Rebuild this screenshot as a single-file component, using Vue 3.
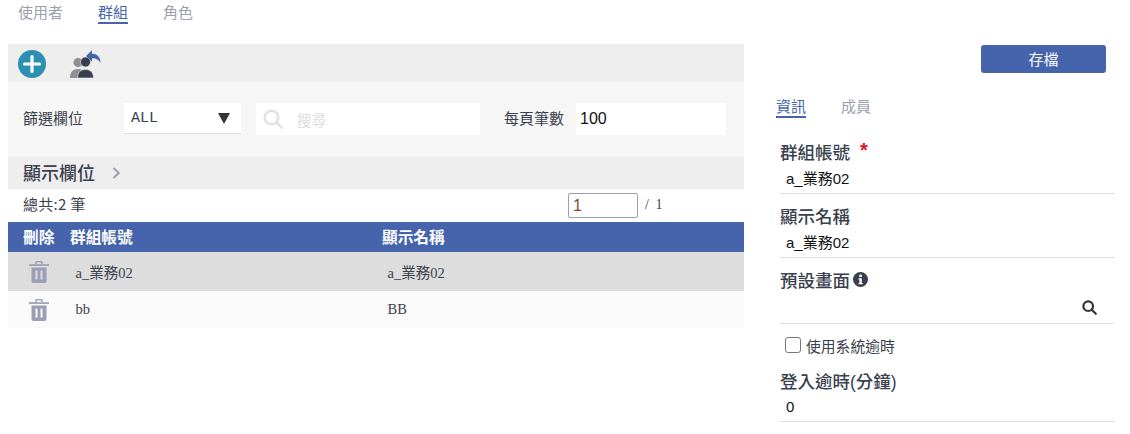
<script setup>
const rows = [
  { id: 'a_業務02', name: 'a_業務02', active: true },
  { id: 'bb', name: 'BB', active: false }
]
</script>

<template>
  <div class="page">
    <main class="left">
      <nav class="tabs">
        <span class="tab">使用者</span>
        <span class="tab on">群組</span>
        <span class="tab">角色</span>
      </nav>
      <div class="toolbar">
        <svg class="ic-plus" width="28" height="28" viewBox="0 0 28 28">
          <circle cx="14" cy="14" r="14" fill="#2c90b4" />
          <path d="M14 6.5v15M6.5 14h15" stroke="#fff" stroke-width="3.2" stroke-linecap="round" />
        </svg>
        <svg class="ic-group" width="32" height="29" viewBox="0 0 32 29">
          <circle cx="8" cy="12.500" r="4.500" fill="#8f8f94" />
          <path d="M0 28c0-6 3-9 8-9 2 0 3 .5 4 1-2 2-3 4-3 8z" fill="#8f8f94" />
          <circle cx="15.500" cy="12" r="5" fill="#3a3f4e" stroke="#eee" stroke-width=".6" />
          <path d="M7.500 28c0-6 3.500-8.500 8-8.500s8 2.500 8 8.500z" fill="#3a3f4e" stroke="#eee" stroke-width=".6" />
          <path d="M16 6 22 0.300v3.500c5 0 8.500 3 8.500 9.500-1.500-3.500-4-5-8.500-5v3.500z" fill="#4564ab" />
        </svg>
      </div>
      <div class="filters">
        <span class="flabel">篩選欄位</span>
        <div class="select">
          <span>ALL</span>
          <i class="caret"></i>
        </div>
        <div class="search">
          <svg width="20" height="20" viewBox="0 0 20 20" fill="none" stroke="#e2e2e2" stroke-width="2.600">
            <circle cx="8.500" cy="8.500" r="6.800" />
            <path d="M13.500 13.500 18.500 18.500" stroke-linecap="round" />
          </svg>
          <span class="ph">搜尋</span>
        </div>
        <span class="plabel">每頁筆數</span>
        <div class="pagesize">100</div>
      </div>
      <div class="section">
        <span class="stitle">顯示欄位</span>
        <svg width="9" height="12" viewBox="0 0 9 12" fill="none" stroke="#9a9fb5" stroke-width="2">
          <path d="M1.500 1 6.800 6 1.500 11" />
        </svg>
      </div>
      <div class="summary">
        <span class="total">總共:2 筆</span>
        <div class="pager">
          <span class="pageinput">1</span>
          <span class="pagetotal">/ 1</span>
        </div>
      </div>
      <div class="thead">
        <span class="c1">刪除</span>
        <span>群組帳號</span>
        <span>顯示名稱</span>
      </div>
      <div v-for="r in rows" :key="r.id" class="trow" :class="{ active: r.active }">
        <span class="trash">
          <svg width="20" height="22" viewBox="0 0 20 22">
            <path d="M7 3V1.800C7 1 7.600.5 8.400.5h3.200c.8 0 1.400.5 1.400 1.300V3" fill="none" stroke="#9a9fb5" stroke-width="1.500" />
            <path d="M0 3.200h20v1.700H0z" fill="#9a9fb5" />
            <path fill-rule="evenodd" d="M2.500 6.500h15V20c0 1.100-.9 2-2 2h-11c-1.100 0-2-.9-2-2zM6.500 9.500v9h2v-9zM11.500 9.500v9h2v-9z" fill="#9a9fb5" />
          </svg>
        </span>
        <span class="cell">{{ r.id }}</span>
        <span class="cell">{{ r.name }}</span>
      </div>
    </main>

    <aside class="right">
      <div class="savebar"><button class="save" type="button">存檔</button></div>
      <nav class="subtabs">
        <span class="tab on">資訊</span>
        <span class="tab">成員</span>
      </nav>
      <div class="form">
        <div class="field f1">
          <label>群組帳號<em>*</em></label>
          <div class="value">a_業務02</div>
        </div>
        <div class="field f2">
          <label>顯示名稱</label>
          <div class="value">a_業務02</div>
        </div>
        <div class="field f3">
          <label>預設畫面
            <svg width="15" height="15" viewBox="0 0 15 15">
              <circle cx="7.500" cy="7.500" r="7.500" fill="#3a3f4e" />
              <rect x="6.300" y="2.600" width="2.500" height="2.400" fill="#fff" />
              <path d="M5.500 6.200h3.300v4.700h1v1.300H5.500v-1.300h.9V7.500h-.9z" fill="#fff" />
            </svg>
          </label>
          <div class="value lookup">
            <svg width="15" height="15" viewBox="0 0 15 15" fill="none" stroke="#2f3442" stroke-width="2.200">
              <circle cx="6.200" cy="6.200" r="4.800" />
              <path d="M9.800 9.800 13.800 13.800" stroke-linecap="round" />
            </svg>
          </div>
        </div>
        <div class="check"><i class="box"></i><span>使用系統逾時</span></div>
        <div class="field f4">
          <label>登入逾時(分鐘)</label>
          <div class="value">0</div>
        </div>
      </div>
    </aside>
  </div>
</template>

<style scoped>
.page {
  width: 1130px;
  height: 434px;
  overflow: hidden;
  display: flex;
  background: #fff;
  color: #3a3f4e;
  font-family: "Noto Sans CJK TC", "Liberation Sans", sans-serif;
  font-size: 15px;
}
.left {
  width: 736px;
  margin-left: 8px;
  flex: none;
}
.tabs {
  height: 44px;
  padding-left: 10px;
  display: flex;
  gap: 35px;
  align-items: flex-start;
}
.tab {
  display: block;
  height: 24px;
  line-height: 24px;
  font-size: 15px;
  color: #9a9fb0;
  box-sizing: border-box;
}
.tab.on {
  color: #4564ab;
  border-bottom: 2px solid #4564ab;
}
.toolbar {
  height: 38px;
  background: #eee;
  display: flex;
  align-items: center;
  padding-left: 10px;
  gap: 24px;
}
.ic-plus { margin-top: 2px; }
.ic-group { margin-top: 3px; }
.filters {
  height: 75px;
  background: #f6f6f6;
  box-sizing: border-box;
  padding: 21px 0 0 15px;
  display: flex;
  align-items: flex-start;
}
.flabel, .plabel { line-height: 30px; color: #3a3f4e; }
.flabel { width: 101px; }
.select {
  width: 117px;
  height: 31px;
  box-sizing: border-box;
  background: #fff;
  border-bottom: 1px solid #ddd;
  padding: 0 10px 0 7px;
  display: flex;
  align-items: center;
  justify-content: space-between;
  font-family: "Liberation Mono", monospace;
  font-size: 15px;
}
.caret {
  width: 0;
  height: 0;
  border-left: 6.500px solid transparent;
  border-right: 6.500px solid transparent;
  border-top: 11px solid #333;
  margin-right: 1px;
}
.search {
  width: 224px;
  height: 32px;
  margin-left: 15px;
  background: #fff;
  padding-left: 7px;
  box-sizing: border-box;
  display: flex;
  align-items: center;
}
.ph { margin-left: 14px; color: #dcdcdc; font-size: 14.500px; }
.plabel { margin-left: 24px; width: 72px; }
.pagesize {
  width: 150px;
  height: 32px;
  background: #fff;
  box-sizing: border-box;
  padding-left: 4px;
  font: 16px/32px "Liberation Sans", sans-serif;
  color: #111;
}
.section {
  height: 32px;
  background: #eee;
  display: flex;
  align-items: center;
  padding-left: 15px;
  gap: 17px;
}
.stitle { font-size: 18px; line-height: 30px; padding-bottom: 2px; font-weight: 500; color: #3a3f4e; }
.summary {
  height: 33px;
  padding-left: 15px;
  display: flex;
  align-items: center;
  justify-content: space-between;
}
.total { font-size: 15px; letter-spacing: .3px; line-height: 20px; padding-bottom: 3px; }
.pager {
  display: flex;
  align-items: center;
  width: 176px;
  margin-top: -1px;
}
.pageinput {
  width: 70px;
  height: 25px;
  box-sizing: border-box;
  border: 1px solid #9a9fb5;
  border-radius: 2px;
  padding-left: 4px;
  font: 16px/23px "Liberation Sans", sans-serif;
  color: #7a4a3a;
}
.pagetotal {
  margin-left: 7px;
  font: 14px "Liberation Serif", serif;
  word-spacing: 3px;
}
.thead, .trow {
  display: grid;
  grid-template-columns: 62px 312px 1fr;
  align-items: center;
}
.thead {
  height: 30px;
  padding-bottom: 2px;
  box-sizing: border-box;
  background: #4564ab;
  color: #fff;
  font-weight: 700;
  font-size: 15.700px;
}
.c1 { padding-left: 15px; }
.trow {
  height: 37px;
  background: #fafafa;
  font-size: 14.500px;
}
.trow.active {
  height: 39px;
  background: #ddd;
}
.trash {
  display: flex;
  padding-left: 21px;
}
.cell {
  padding-left: 5.500px;
  padding-bottom: 1px;
  font-family: "Liberation Serif", "Noto Sans CJK TC", serif;
  color: #3a3f4e;
}
.right {
  width: 338px;
  margin-left: 32px;
  flex: none;
}
.savebar {
  height: 29px;
  margin-top: 45px;
  display: flex;
  justify-content: flex-end;
  padding-right: 8px;
}
.save {
  width: 125px;
  height: 28px;
  padding: 0;
  border: none;
  border-radius: 3px;
  background: #4564ab;
  color: #fff;
  font-family: inherit;
  font-size: 15px;
  line-height: 26px;
}
.subtabs {
  margin-top: 20px;
  display: flex;
  gap: 35px;
}
.subtabs .tab { height: 24px; }
.form {
  margin-top: 21px;
  padding-left: 4px;
  display: flex;
  flex-direction: column;
}
.field label {
  display: flex;
  align-items: center;
  height: 24px;
  margin-bottom: 4px;
  font-size: 17.500px;
  font-weight: 500;
  color: #3a3f4e;
  font-family: "Liberation Sans", "Noto Sans CJK TC", sans-serif;
}
.field label svg { margin-left: 3px; }
.field label em {
  color: #e8131f;
  font-style: normal;
  font-weight: 700;
  font-size: 20px;
  margin-left: 10px;
  margin-top: -2px;
}
.value {
  height: 27px;
  box-sizing: border-box;
  padding-left: 6px;
  border-bottom: 1px solid #ddd;
  font: 15px/24px "Liberation Sans", "Noto Sans CJK TC", sans-serif;
  color: #111;
}
.f2, .f3 { margin-top: 9px; }
.lookup {
  height: 29px;
  display: flex;
  justify-content: flex-end;
  padding: 5px 17px 0 0;
}
.check {
  display: flex;
  align-items: center;
  margin-top: 11px;
  padding-left: 5px;
  height: 20px;
  font-size: 14.800px;
  color: #3a3f4e;
}
.box {
  width: 16px;
  height: 16px;
  box-sizing: border-box;
  border: 1.500px solid #777;
  border-radius: 3px;
  margin-right: 5px;
  background: #fff;
}
.f4 { margin-top: 13px; }
.f4 label { margin-bottom: 3px; }
</style>
